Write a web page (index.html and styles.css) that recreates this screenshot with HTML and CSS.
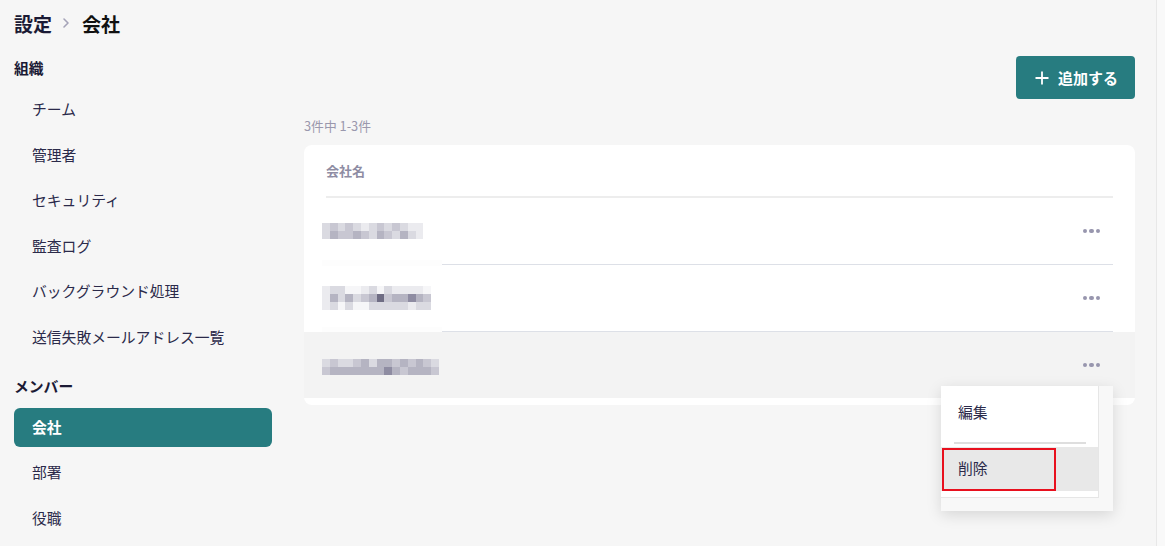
FILE: index.html
```html
<!DOCTYPE html>
<html lang="ja">
<head>
<meta charset="utf-8">
<link rel="stylesheet" href="styles.css">
</head>
<body>
<div class="page">
  <aside class="sidebar">
    <div class="crumbs"><span>設定</span><svg class="chev" width="8" height="12" viewBox="0 0 8 12"><path d="M2 2l4 4-4 4" fill="none" stroke="#a5a3b8" stroke-width="1.6" stroke-linecap="round" stroke-linejoin="round"/></svg><span class="cur">会社</span></div>
    <div class="group-title first">組織</div>
    <a class="nav">チーム</a>
    <a class="nav">管理者</a>
    <a class="nav">セキュリティ</a>
    <a class="nav">監査ログ</a>
    <a class="nav">バックグラウンド処理</a>
    <a class="nav">送信失敗メールアドレス一覧</a>
    <div class="group-title second">メンバー</div>
    <a class="nav active">会社</a>
    <a class="nav after">部署</a>
    <a class="nav">役職</a>
  </aside>
  <main class="main">
    <div class="toolbar">
      <button class="add-btn"><svg width="14" height="14" viewBox="0 0 14 14"><path d="M7 0.5v13M0.5 7h13" stroke="#fff" stroke-width="1.8"/></svg><span>追加する</span></button>
    </div>
    <div class="count">3件中 1-3件</div>
    <div class="card">
      <div class="card-head"><span>会社名</span></div>
      <div class="row">
        <div class="row-in">
          <div class="blur b1">
            <div class="pr"><i class="c3"></i><i class="c2"></i><i class="c3"></i><i class="c2"></i><i class="c3"></i><i class="c4"></i><i class="c3"></i><i class="c2"></i><i class="c3"></i><i class="c2"></i><i class="c3"></i><i class="c4"></i><i class="c4"></i></div>
            <div class="pr"><i class="c3"></i><i class="c1"></i><i class="c2"></i><i class="c2"></i><i class="c1"></i><i class="c2"></i><i class="c3"></i><i class="c1"></i><i class="c2"></i><i class="c3"></i><i class="c1"></i><i class="c3"></i><i class="c4"></i></div>
          </div>
          <span class="dots"><i></i><i></i><i></i></span>
        </div>
      </div>
      <div class="row">
        <div class="row-in">
          <div class="blur b2">
            <div class="pr"><i class="c4"></i><i class="c3"></i><i class="c3"></i><i class="c5"></i><i class="c5"></i><i class="c4"></i><i class="c3"></i><i class="c5"></i><i class="c3"></i><i class="c4"></i><i class="c4"></i><i class="c4"></i><i class="c4"></i><i class="c5"></i></div>
            <div class="pr"><i class="c4"></i><i class="c1"></i><i class="c3"></i><i class="c1"></i><i class="c3"></i><i class="c2"></i><i class="c1"></i><i class="c0"></i><i class="c2"></i><i class="c1"></i><i class="c1"></i><i class="c0b"></i><i class="c1"></i><i class="c2"></i></div>
            <div class="pr"><i class="c4"></i><i class="c3"></i><i class="c5"></i><i class="c3"></i><i class="c5"></i><i class="c5"></i><i class="c3"></i><i class="c3"></i><i class="c3"></i><i class="c3"></i><i class="c3"></i><i class="c4"></i><i class="c3"></i><i class="c3"></i></div>
          </div>
          <span class="dots"><i></i><i></i><i></i></span>
        </div>
      </div>
      <div class="row hover">
        <div class="row-in">
          <div class="blur b3">
            <div class="pr"><i class="c3"></i><i class="c2"></i><i class="c3"></i><i class="c3"></i><i class="c2"></i><i class="c1"></i><i class="c3"></i><i class="c1"></i><i class="c1"></i><i class="c2"></i><i class="c1"></i><i class="c2"></i><i class="c1"></i><i class="c2"></i><i class="c3"></i></div>
            <div class="pr"><i class="c2"></i><i class="c1"></i><i class="c1"></i><i class="c1"></i><i class="c1"></i><i class="c1"></i><i class="c1"></i><i class="c1"></i><i class="c0b"></i><i class="c1"></i><i class="c2"></i><i class="c1"></i><i class="c1"></i><i class="c1"></i><i class="c2"></i></div>
          </div>
          <span class="dots"><i></i><i></i><i></i></span>
        </div>
        <div class="menu">
          <div class="menu-inner">
            <div class="menu-item edit">編集</div>
            <div class="menu-sep"></div>
            <div class="menu-item del">削除</div>
          </div>
          <div class="highlight"></div>
        </div>
      </div>
    </div>
  </main>
  <div class="edge"></div>
</div>
</body>
</html>
```

FILE: styles.css
```css
* { box-sizing: border-box; }
html, body { margin: 0; padding: 0; }
body {
  background: #f6f6f6;
  font-family: "Noto Sans CJK JP", "Noto Sans", sans-serif;
  color: #2b2a4a;
  width: 1165px;
  height: 546px;
  overflow: hidden;
}
.page {
  display: flex;
  height: 546px;
}
.sidebar {
  width: 258px;
  margin-left: 14px;
  display: flex;
  flex-direction: column;
}
.crumbs {
  margin-top: 11px;
  height: 24px;
  display: flex;
  align-items: center;
  font-size: 19px;
  font-weight: 700;
  color: #1b1a35;
}
.crumbs .chev { margin: 0 12px 0 10px; }
.crumbs .cur { color: #111; }
.group-title {
  height: 22px;
  line-height: 22px;
  font-size: 14.8px;
  font-weight: 700;
  color: #1b1a35;
}
.group-title.first { margin-top: 22px; margin-bottom: 7.2px; }
.group-title.second { margin-top: 15.2px; margin-bottom: 11px; }
.nav {
  display: flex;
  align-items: center;
  height: 45.6px;
  padding-left: 18px;
  padding-bottom: 1px;
  font-size: 14.8px;
  color: #2b2a4a;
}
.nav.active {
  height: 39px;
  background: #277c80;
  color: #fff;
  font-weight: 700;
  border-radius: 6px;
}
.nav.after { margin-top: 2.2px; }

.main {
  width: 831px;
  margin-left: 32px;
  display: flex;
  flex-direction: column;
}
.toolbar {
  display: flex;
  justify-content: flex-end;
  padding-top: 56px;
}
.add-btn {
  width: 119px;
  height: 43px;
  border: 0;
  border-radius: 4px;
  background: #277c80;
  color: #fff;
  font-family: inherit;
  font-size: 15px;
  font-weight: 700;
  display: flex;
  align-items: center;
  justify-content: center;
  gap: 9px;
  padding: 0 0 0 2px;
}
.count {
  margin-top: 19px;
  height: 16px;
  line-height: 16px;
  font-size: 12.8px;
  color: #9a98ad;
}
.card {
  margin-top: 11px;
  background: #fff;
  border-radius: 8px;
  padding-bottom: 7px;
}
.card-head {
  margin: 0 22px;
  height: 53px;
  border-bottom: 2px solid #ededed;
  display: flex;
  align-items: center;
  font-size: 13px;
  font-weight: 700;
  color: #8e8ca3;
}
.row {
  position: relative;
  height: 67px;
  padding: 0 22px 0 18px;
}
.row.hover { background: #f3f3f3; height: 66px; }
.row-in {
  height: 100%;
  display: flex;
  align-items: center;
  justify-content: space-between;
  border-bottom: 1px solid #dde0e7;
  position: relative;
}
.row.hover .row-in { border-bottom: 0; }
.row:not(.hover) .row-in::after {
  content: "";
  position: absolute;
  left: 0;
  bottom: -2px;
  width: 120px;
  height: 6px;
  background: #fdfdfd;
}
.blur { display: flex; flex-direction: column; }
.blur.b1 { margin-top: -1px; }
.blur.b3 { margin-top: 4px; }
.pr { display: flex; height: 8px; }
.pr i { display: block; width: 7.8px; height: 8px; }
.c0 { background: #6f6d84; }
.c0b { background: #8e8ca2; }
.c1 { background: #b5b4c2; }
.c2 { background: #c8c7d2; }
.c3 { background: #dadae1; }
.c4 { background: #ebebef; }
.c5 { background: #f6f6f8; }
.dots {
  display: flex;
  gap: 2px;
  margin-right: 13px;
}
.dots i {
  width: 4.5px;
  height: 4.5px;
  border-radius: 50%;
  background: #9896ae;
}
.menu {
  position: absolute;
  left: 637px;
  top: 54px;
  width: 172px;
  height: 125px;
  background: #f8f8f8;
  box-shadow: 0 4px 14px rgba(0, 0, 0, 0.13);
  z-index: 5;
}
.menu-inner {
  width: 158px;
  height: 112px;
  background: #fff;
  border-right: 1px solid #e6e6e6;
  border-bottom: 1px solid #e6e6e6;
}
.menu-item {
  height: 56px;
  display: flex;
  align-items: center;
  padding-left: 17px;
  font-size: 14.8px;
  color: #2b2a4a;
}
.menu-item.edit { padding-bottom: 6px; }
.menu-sep {
  margin: 0 12px 0 13px;
  height: 2px;
  background: #dedede;
}
.menu-item.del {
  margin-top: 3px;
  height: 44px;
  padding-bottom: 4px;
  background: #e8e8e8;
}
.highlight {
  position: absolute;
  left: 1px;
  top: 62px;
  width: 114px;
  height: 43px;
  border: 2px solid #e8101e;
}
.edge {
  margin-left: 21px;
  flex: 1;
  border-left: 1px solid #e8e8e8;
  background: #f9f9f9;
}
```
